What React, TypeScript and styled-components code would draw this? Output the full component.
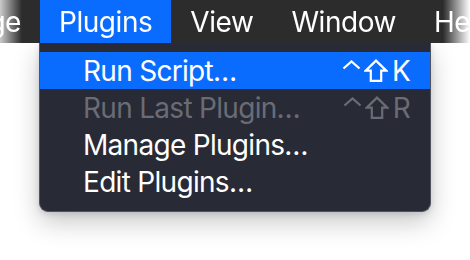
import React from "react";
import styled, { createGlobalStyle } from "styled-components";

const Global = createGlobalStyle`
  html, body { margin: 0; padding: 0; background: #ffffff; }
  body { font-family: Inter, "Noto Sans", sans-serif; -webkit-font-smoothing: antialiased; }
`;

const Page = styled.div`
  width: 470px;
  height: 260px;
  background: #ffffff;
  display: flex;
  flex-direction: column;
  overflow: hidden;
`;

const Bar = styled.div`
  height: 43px;
  width: 470px;
  display: flex;
  align-items: stretch;
  background: #2c2c2c;
  -webkit-mask-image: linear-gradient(to right, rgba(0,0,0,0.25) 0px, #000 22px, #000 443px, rgba(0,0,0,0) 470px);
  mask-image: linear-gradient(to right, rgba(0,0,0,0.25) 0px, #000 22px, #000 443px, rgba(0,0,0,0) 470px);
  flex-shrink: 0;
`;

const Clipped = styled.div`
  width: 40px;
  display: flex;
  justify-content: flex-end;
  overflow: hidden;
  flex-shrink: 0;
`;

const Title = styled.div<{ $active?: boolean }>`
  display: flex;
  align-items: center;
  padding: 0 19px;
  flex-shrink: 0;
  white-space: nowrap;
  font-size: 28px;
  letter-spacing: -0.45px;
  color: #ffffff;
  background: ${(p) => (p.$active ? "#0a6cff" : "transparent")};
`;

const Menu = styled.div`
  margin-left: 39px;
  width: 392px;
  height: 169px;
  box-sizing: border-box;
  background: #282a35;
  border: 1px solid #50535d;
  border-top: none;
  border-radius: 0 0 9px 9px;
  padding: 9px 0 0;
  display: flex;
  flex-direction: column;
  box-shadow: 0 10px 26px rgba(0, 0, 0, 0.22), 0 2px 6px rgba(0, 0, 0, 0.12);
`;

const Row = styled.div<{ $active?: boolean; $disabled?: boolean }>`
  height: 37px;
  display: flex;
  align-items: center;
  justify-content: space-between;
  padding: 0 20px 0 43px;
  font-size: 28px;
  letter-spacing: -0.7px;
  white-space: nowrap;
  background: ${(p) => (p.$active ? "#0a6cff" : "transparent")};
  color: ${(p) => (p.$disabled ? "#6a6c75" : "#ffffff")};
`;

const Shortcut = styled.div`
  display: flex;
  align-items: center;
  gap: 3px;
`;

const Key = styled.span`
  margin-left: 1px;
`;

const Control = () => (
  <svg width="19" height="10" viewBox="0 0 19 10" style={{ marginTop: -11 }}>
    <path d="M1.5 8.5 L9.5 1.5 L17.5 8.5" fill="none" stroke="currentColor" strokeWidth="2.3" />
  </svg>
);

const Shift = () => (
  <svg width="24" height="23" viewBox="0 0 24 23">
    <path
      d="M12 1.6 L22.3 11.6 L17.2 11.6 L17.2 21.8 L6.8 21.8 L6.8 11.6 L1.7 11.6 Z"
      fill="none"
      stroke="currentColor"
      strokeWidth="2.2"
      strokeLinejoin="miter"
    />
  </svg>
);

export default function App() {
  return (
    <Page>
      <Global />
      <Bar>
        <Clipped>
          <Title>Arrange</Title>
        </Clipped>
        <Title $active>Plugins</Title>
        <Title>View</Title>
        <Title>Window</Title>
        <Title>Help</Title>
      </Bar>
      <Menu>
        <Row $active>
          <span>Run Script…</span>
          <Shortcut>
            <Control />
            <Shift />
            <Key>K</Key>
          </Shortcut>
        </Row>
        <Row $disabled>
          <span>Run Last Plugin…</span>
          <Shortcut>
            <Control />
            <Shift />
            <Key>R</Key>
          </Shortcut>
        </Row>
        <Row>
          <span>Manage Plugins…</span>
        </Row>
        <Row>
          <span>Edit Plugins…</span>
        </Row>
      </Menu>
    </Page>
  );
}
